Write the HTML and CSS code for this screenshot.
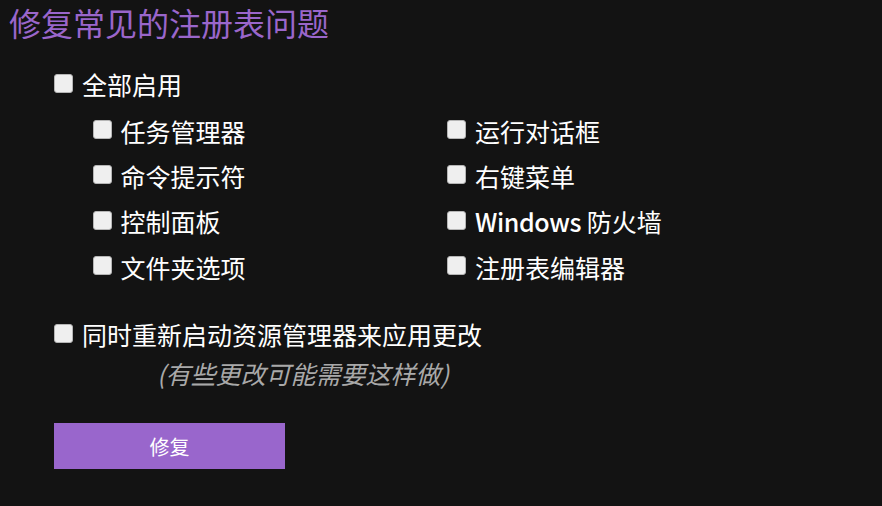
FILE: index.html
```html
<!DOCTYPE html>
<html lang="zh-CN">
<head>
<meta charset="utf-8">
<title>修复常见的注册表问题</title>
<link rel="stylesheet" href="styles.css">
</head>
<body>
<h1 class="title">修复常见的注册表问题</h1>
<div class="panel">
  <label class="row main-row"><input type="checkbox" class="box"><span>全部启用</span></label>
  <div class="grid">
    <label class="row"><input type="checkbox" class="box"><span>任务管理器</span></label>
    <label class="row"><input type="checkbox" class="box"><span>运行对话框</span></label>
    <label class="row"><input type="checkbox" class="box"><span>命令提示符</span></label>
    <label class="row"><input type="checkbox" class="box"><span>右键菜单</span></label>
    <label class="row"><input type="checkbox" class="box"><span>控制面板</span></label>
    <label class="row"><input type="checkbox" class="box"><span><span class="latin">Windows</span> 防火墙</span></label>
    <label class="row"><input type="checkbox" class="box"><span>文件夹选项</span></label>
    <label class="row"><input type="checkbox" class="box"><span>注册表编辑器</span></label>
  </div>
  <label class="row main-row restart"><input type="checkbox" class="box"><span>同时重新启动资源管理器来应用更改</span></label>
  <div class="note">(有些更改可能需要这样做)</div>
  <button class="fix-btn" type="button">修复</button>
</div>
</body>
</html>
```

FILE: styles.css
```css
html, body {
  margin: 0;
  padding: 0;
  background: #131313;
}
body {
  width: 882px;
  height: 506px;
  overflow: hidden;
  font-family: "Noto Sans CJK SC", "Noto Sans", sans-serif;
  color: #ffffff;
}
.title {
  margin: 0;
  padding-left: 9px;
  font-size: 32px;
  font-weight: normal;
  line-height: 44px;
  color: #9a66cb;
}
.panel {
  display: flex;
  flex-direction: column;
  align-items: flex-start;
  padding-left: 54px;
  margin-top: 20px;
}
.row {
  display: flex;
  align-items: center;
  font-size: 25px;
  line-height: 38px;
  height: 38px;
  cursor: default;
}
.row > span {
  position: relative;
  top: 1px;
}
.box {
  appearance: none;
  -webkit-appearance: none;
  margin: 0 9px 0 0;
  width: 19px;
  height: 19px;
  box-sizing: border-box;
  border: 1px solid #b5b5b5;
  border-radius: 3px;
  background: #efefef;
  flex: none;
}
.grid {
  display: grid;
  grid-template-columns: 354.5px 354.5px;
  grid-auto-rows: 45.33px;
  margin-top: 5px;
  padding-left: 38.5px;
}
.grid .row {
  height: 45.33px;
}
.latin {
  font-weight: 500;
  letter-spacing: -0.4px;
}
.restart {
  margin-top: 26px;
}
.note {
  margin-left: 103px;
  height: 44px;
  line-height: 42px;
  font-size: 25px;
  font-style: italic;
  color: #a9a9a9;
}
.fix-btn {
  margin-top: 26px;
  width: 231px;
  height: 46px;
  border: none;
  background: #9966cc;
  color: #ffffff;
  font-family: "Noto Sans CJK SC", sans-serif;
  font-size: 20px;
  padding: 0;
  transform: translateY(1px);
}
```
